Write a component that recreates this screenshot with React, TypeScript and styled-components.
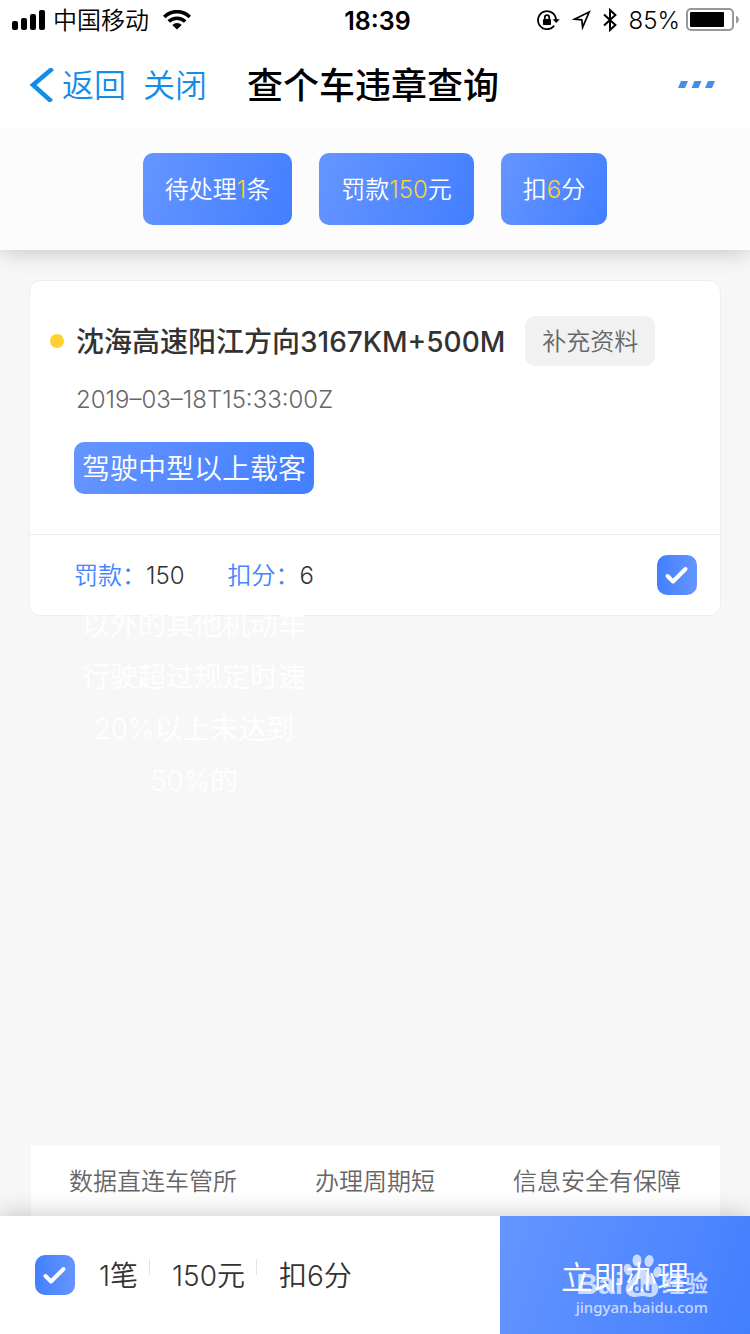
import React from 'react';
import styled, { createGlobalStyle, css } from 'styled-components';

const blueGradient = 'linear-gradient(110deg, #6695ff 0%, #427fff 100%)';

const GlobalStyle = createGlobalStyle`
  *, *::before, *::after { box-sizing: border-box; }
  body {
    margin: 0;
    background: #f7f7f7;
    color: #333;
    font-family: Inter, "Noto Sans CJK SC", sans-serif;
    font-size: 24px;
    font-weight: 350;
  }
  button { font: inherit; border: 0; padding: 0; background: none; cursor: pointer; }
  h1, h2, p, ul, dl, dd { margin: 0; padding: 0; }
`;

const Page = styled.div`
  display: flex;
  flex-direction: column;
  min-height: 100vh;
`;

const StatusBar = styled.header`
  position: relative;
  z-index: 1;
  display: grid;
  grid-template-columns: 1fr auto 1fr;
  align-items: center;
  height: 40px;
  padding: 0 11px 0 12px;
  background: #fff;
  color: #000;
  line-height: 38px;
`;

const StatusGroup = styled.div<{ $gap: number; $end?: boolean }>`
  display: flex;
  align-items: center;
  gap: ${(p) => p.$gap}px;
  white-space: nowrap;
  ${(p) => p.$end && css`justify-content: flex-end;`}
`;

const StatusText = styled.span`
  padding-top: 2px;
`;

const Clock = styled.time`
  padding: 2px 0 0 4px;
  font-size: 25px;
  font-weight: 600;
`;

const NavBar = styled.nav`
  position: relative;
  z-index: 1;
  display: grid;
  grid-template-columns: 1fr auto 1fr;
  align-items: center;
  height: 89px;
  padding: 0 34px 0 30px;
  background: #fff;
`;

const NavActions = styled.div`
  display: flex;
  gap: 17px;
`;

const NavButton = styled.button`
  display: flex;
  align-items: center;
  gap: 8px;
  color: #108ee9;
  font-size: 32px;
  line-height: 48px;
  white-space: nowrap;
`;

const NavLabel = styled.span`
  padding-top: 2px;
`;

const NavTitle = styled.h1`
  padding-top: 2px;
  color: #000;
  font-size: 36px;
  font-weight: 500;
  line-height: 48px;
`;

const MoreButton = styled.button`
  display: flex;
  justify-self: end;
`;

const Summary = styled.section`
  position: relative;
  display: flex;
  justify-content: center;
  gap: 27px;
  padding: 24px 0 25px;
  background: #fcfcfc;
  box-shadow: 0 0 24px rgba(0, 0, 0, 0.24);
`;

const SummaryPill = styled.div`
  height: 72px;
  padding: 0 22px;
  border-radius: 10px;
  background: ${blueGradient};
  color: #fff;
  line-height: 74px;
`;

const Highlight = styled.span`
  color: #ffcf33;
`;

const Main = styled.main`
  flex: 1;
  padding: 30px 29px;
`;

const Card = styled.article`
  border: 1px solid #eee;
  border-radius: 12px;
  background: #fff;
`;

const CardBody = styled.div`
  padding: 35px 20px 40px;
`;

const TitleRow = styled.div`
  display: flex;
  align-items: center;
`;

const Dot = styled.span`
  flex: none;
  width: 14px;
  height: 14px;
  margin-right: 12px;
  border-radius: 50%;
  background: #ffd02f;
`;

const Place = styled.h2`
  padding-top: 2px;
  font-size: 28px;
  font-weight: 500;
  line-height: 40px;
  white-space: nowrap;
`;

const SupplyButton = styled.button`
  flex: none;
  width: 130px;
  height: 50px;
  margin-left: 20px;
  padding-bottom: 4px;
  border-radius: 10px;
  background: #f1f1f1;
  color: #666;
`;

const DateTime = styled.time`
  display: block;
  margin: 16px 0 24px 26px;
  color: #666;
  line-height: 36px;
`;

const Offence = styled.p`
  position: relative;
  width: 240px;
  height: 52px;
  margin-left: 24px;
  padding: 0 8px;
  border-radius: 10px;
  background: ${blueGradient};
  color: #fff;
  font-size: 28px;
  line-height: 54px;
  text-align: center;
`;

const OffenceOverflow = styled.span`
  position: absolute;
  top: 157px;
  left: 8px;
  right: 8px;
  line-height: 52px;
`;

const CardFooter = styled.div`
  position: relative;
  display: flex;
  align-items: center;
  justify-content: space-between;
  height: 81px;
  padding: 0 23px 0 44px;
  border-top: 1px solid #eee;
  border-radius: 0 0 12px 12px;
  background: #fff;
`;

const Facts = styled.dl`
  display: flex;
  gap: 43px;
  padding-top: 2px;
`;

const Fact = styled.div`
  display: flex;
  line-height: 36px;
`;

const FactLabel = styled.dt`
  color: #4684ff;
`;

const CheckWrap = styled.span`
  display: grid;
  flex: none;
  width: 40px;
  height: 40px;

  & > * { grid-area: 1 / 1; }
  & > svg { pointer-events: none; }
`;

const CheckInput = styled.input`
  appearance: none;
  width: 40px;
  height: 40px;
  margin: 0;
  border-radius: 10px;
  background: #ddd;

  &:checked { background: linear-gradient(90deg, #427fff, #6695ff); }
`;

const Promises = styled.ul`
  display: flex;
  justify-content: space-between;
  height: 70px;
  margin: 0 30px 0 31px;
  padding: 0 39px 0 38px;
  background: #fff;
  color: #666;
  line-height: 72px;
  list-style: none;
`;

const BottomBar = styled.footer`
  position: relative;
  display: grid;
  grid-template-columns: 2fr 1fr;
  height: 118px;
  background: #fff;
  box-shadow: 0 0 24px rgba(0, 0, 0, 0.24);
`;

const Totals = styled.div`
  display: flex;
  align-items: center;
  padding-left: 35px;
  font-size: 28px;
  line-height: 40px;
`;

const TotalItems = styled.div`
  display: flex;
  margin-left: 24px;
  padding-top: 2px;
`;

const Divider = styled.span`
  width: 1px;
  height: 16px;
  margin: 3px 22px 0 11px;
  background: #e4e4e4;
`;

const SubmitButton = styled.button`
  background: ${blueGradient};
  color: #fff;
  font-size: 32px;
`;

const Watermark = styled.div`
  position: absolute;
  right: 42px;
  bottom: 17px;
  color: rgba(255, 255, 255, 0.7);
  pointer-events: none;
`;

const WatermarkLogo = styled.div`
  display: flex;
  align-items: flex-end;
  justify-content: flex-end;
  height: 42px;
  font-family: "Liberation Sans", "Noto Sans CJK SC", sans-serif;
  font-size: 30px;
  font-weight: 700;
  line-height: 26px;
`;

const WatermarkSuffix = styled.span`
  font-size: 23px;
`;

const WatermarkUrl = styled.div`
  font-family: "Noto Sans", sans-serif;
  font-size: 15px;
  font-weight: 500;
  line-height: 20px;
`;

function Check({ label }: { label: string }) {
  return (
    <CheckWrap>
      <CheckInput type="checkbox" defaultChecked aria-label={label} />
      <svg width="40" height="40" viewBox="0 0 40 40" fill="none" aria-hidden="true">
        <path d="M10.5 21 L16 26.5 L28.5 14" stroke="#fff" strokeWidth="4" strokeLinecap="round" strokeLinejoin="round" />
      </svg>
    </CheckWrap>
  );
}

function SignalIcon() {
  return (
    <svg width="34" height="20" viewBox="0 0 34 20" aria-hidden="true">
      <rect x="0" y="11" width="6" height="9" rx="2" />
      <rect x="9" y="8" width="6" height="12" rx="2" />
      <rect x="18" y="4" width="6" height="16" rx="2" />
      <rect x="27" y="0" width="6" height="20" rx="2" />
    </svg>
  );
}

function WifiIcon() {
  return (
    <svg width="28" height="20" viewBox="0 0 28 20" fill="none" stroke="#000" strokeWidth="3.6" aria-hidden="true">
      <path d="M1.2 7 A18 18 0 0 1 26.8 7" />
      <path d="M5.8 11.6 A11.6 11.6 0 0 1 22.2 11.6" />
      <path d="M14 19.5 L9.3 15 A6.5 6.5 0 0 1 18.7 15 Z" fill="#000" stroke="none" />
    </svg>
  );
}

function RotationLockIcon() {
  return (
    <svg width="23" height="20" viewBox="0 0 23 20" fill="none" aria-hidden="true">
      <path d="M17.2 15.6 A9 9 0 1 1 19 10" stroke="#000" strokeWidth="1.8" />
      <path d="M15.6 9.2 H22.8 L19.2 13 Z" fill="#000" />
      <rect x="6" y="9" width="8" height="6" rx="0.8" fill="#000" />
      <path d="M7.8 9.5 V7.4 A2.2 2.2 0 0 1 12.2 7.4 V9.5" stroke="#000" strokeWidth="1.7" />
    </svg>
  );
}

function LocationIcon() {
  return (
    <svg width="19" height="20" viewBox="0 0 19 20" fill="none" aria-hidden="true">
      <path d="M17.2 2 L2.4 9.2 L9.8 9.8 L10.6 17.4 Z" stroke="#000" strokeWidth="1.7" />
    </svg>
  );
}

function BluetoothIcon() {
  return (
    <svg width="14" height="24" viewBox="0 0 14 24" fill="none" aria-hidden="true">
      <path d="M1 6.4 L12.4 17 L7 22 V2 L12.4 7 L1 17.6" stroke="#000" strokeWidth="2" />
    </svg>
  );
}

function BatteryIcon() {
  return (
    <svg width="53" height="24" viewBox="0 0 53 24" fill="none" aria-hidden="true">
      <rect x="1" y="1" width="46" height="21" rx="4" stroke="#999" strokeWidth="2" />
      <rect x="4" y="4" width="34" height="15" rx="1" fill="#000" />
      <path d="M50 7.5 Q53 9 53 11.5 Q53 14 50 15.5 Z" fill="#999" />
    </svg>
  );
}

function PawIcon() {
  return (
    <svg width="39" height="43" viewBox="0 0 39 43" fill="rgba(255,255,255,0.7)" aria-hidden="true">
      <ellipse cx="14" cy="6.5" rx="4.5" ry="6" />
      <ellipse cx="26" cy="7" rx="4.5" ry="6" transform="rotate(12 26 7)" />
      <ellipse cx="5" cy="15.5" rx="4.2" ry="5.8" transform="rotate(-12 5 15.5)" />
      <ellipse cx="34.5" cy="18" rx="4" ry="5.6" transform="rotate(15 34.5 18)" />
      <path d="M19 16 C25 16 26 21 31 26 C38 32 36 43 27 43 C24 43 22 42 19.5 42 C17 42 15 43 12 43 C2 43 0 33 7 27 C12 23 13 16 19 16 Z" />
      <path d="M16.5 25 V38 M16.5 31.5 H13.5 Q11 31.5 11 34 V35 Q11 38 13.5 38 H16.5 M21.5 30.5 V35 Q21.5 38 24.5 38 H27.5 V30.5" fill="none" stroke="#5288ff" strokeWidth="2.2" />
    </svg>
  );
}

export default function App() {
  return (
    <>
      <GlobalStyle />
      <Page>
        <StatusBar>
          <StatusGroup $gap={7}>
            <SignalIcon />
            <StatusGroup $gap={14}>
              <StatusText>中国移动</StatusText>
              <WifiIcon />
            </StatusGroup>
          </StatusGroup>
          <Clock>18:39</Clock>
          <StatusGroup $gap={12} $end>
            <RotationLockIcon />
            <LocationIcon />
            <BluetoothIcon />
            <StatusGroup $gap={6}>
              <StatusText>85%</StatusText>
              <BatteryIcon />
            </StatusGroup>
          </StatusGroup>
        </StatusBar>

        <NavBar>
          <NavActions>
            <NavButton type="button">
              <svg width="24" height="34" viewBox="0 0 24 34" fill="none" aria-hidden="true">
                <path d="M22.5 0.5 L3 17 L21.5 33.5" stroke="#108ee9" strokeWidth="4.5" />
              </svg>
              <NavLabel>返回</NavLabel>
            </NavButton>
            <NavButton type="button">
              <NavLabel>关闭</NavLabel>
            </NavButton>
          </NavActions>
          <NavTitle>查个车违章查询</NavTitle>
          <MoreButton type="button" aria-label="更多">
            <svg width="38" height="7" viewBox="0 0 38 7" fill="#3f90e8" aria-hidden="true">
              <path d="M3 0 H10 L7 7 H0 Z M16.5 0 H23.5 L20.5 7 H13.5 Z M30 0 H37 L34 7 H27 Z" />
            </svg>
          </MoreButton>
        </NavBar>

        <Summary>
          <SummaryPill>待处理<Highlight>1</Highlight>条</SummaryPill>
          <SummaryPill>罚款<Highlight>150</Highlight>元</SummaryPill>
          <SummaryPill>扣<Highlight>6</Highlight>分</SummaryPill>
        </Summary>

        <Main>
          <Card>
            <CardBody>
              <TitleRow>
                <Dot />
                <Place>沈海高速阳江方向3167KM+500M</Place>
                <SupplyButton type="button">补充资料</SupplyButton>
              </TitleRow>
              <DateTime>2019–03–18T15:33:00Z</DateTime>
              <Offence>
                驾驶中型以上载客
                <OffenceOverflow>以外的其他机动车行驶超过规定时速20%以上未达到50%的</OffenceOverflow>
              </Offence>
            </CardBody>
            <CardFooter>
              <Facts>
                <Fact>
                  <FactLabel>罚款：</FactLabel>
                  <dd>150</dd>
                </Fact>
                <Fact>
                  <FactLabel>扣分：</FactLabel>
                  <dd>6</dd>
                </Fact>
              </Facts>
              <Check label="选择此条违章" />
            </CardFooter>
          </Card>
        </Main>

        <Promises>
          <li>数据直连车管所</li>
          <li>办理周期短</li>
          <li>信息安全有保障</li>
        </Promises>

        <BottomBar>
          <Totals>
            <Check label="全选" />
            <TotalItems>
              <span>1笔</span>
              <Divider />
              <span>150元</span>
              <Divider />
              <span>扣6分</span>
            </TotalItems>
          </Totals>
          <SubmitButton type="button">立即办理</SubmitButton>
          <Watermark>
            <WatermarkLogo>
              Bai
              <PawIcon />
              <WatermarkSuffix>经验</WatermarkSuffix>
            </WatermarkLogo>
            <WatermarkUrl>jingyan.baidu.com</WatermarkUrl>
          </Watermark>
        </BottomBar>
      </Page>
    </>
  );
}
